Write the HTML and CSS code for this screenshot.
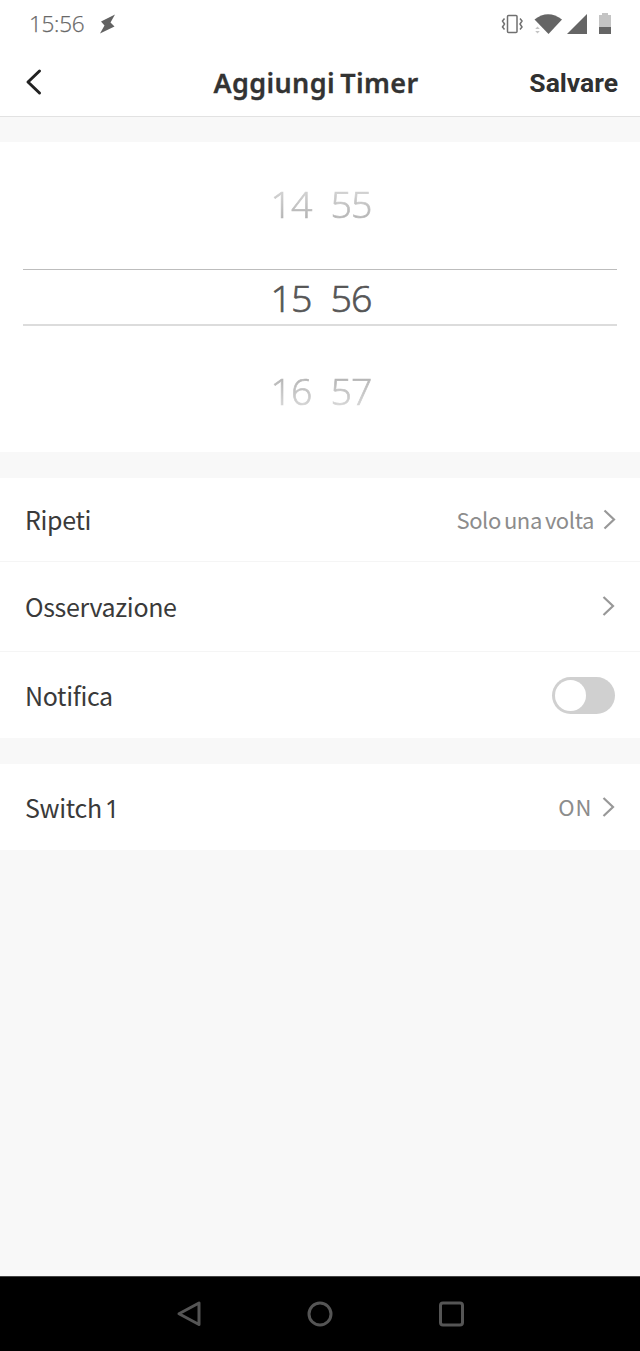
FILE: index.html
```html
<!DOCTYPE html>
<html lang="it">
<head>
<meta charset="utf-8">
<title>Aggiungi Timer</title>
<link rel="stylesheet" href="styles.css">
</head>
<body>
<div class="screen">
  <div class="status">
    <span class="clock">15:56</span>
    <svg class="bolt" width="18" height="22" viewBox="0 0 18 22"><path d="M16 1.500 2 8.500 5.500 12.500 1 20.500 15.500 13.500 11.500 9.500Z" fill="#626262"/></svg>
    <svg class="signals" width="114" height="26" viewBox="500 11 114 26">
      <rect x="507.500" y="15.500" width="9.500" height="17" rx="1" fill="none" stroke="#707070" stroke-width="1.500"/>
      <path d="M504.500 18.500l-2 2.500 2 3-2 3 2 2.500M520 18.500l2 2.500-2 3 2 3-2 2.500" fill="none" stroke="#707070" stroke-width="1.500"/>
      <path d="M534.500 19.500Q548 8.800 562 19.500L548.500 34Z" fill="#656565"/>
      <path d="M535.200 29l2.300-2.500 2.300 2.500zM535.200 31l2.300 2.500 2.300-2.500z" fill="#c4c4c4"/>
      <path d="M587 14v20h-20z" fill="#656565"/>
      <path d="M602 13h6v2h3v12.500h-12V15h3z" fill="#c4c4c4"/>
      <path d="M599 27h12v7h-12z" fill="#656565"/>
    </svg>
  </div>
  <header class="header">
    <svg class="back" width="18" height="28" viewBox="0 0 18 28"><path d="M15.500 3 4 14l11.500 11" fill="none" stroke="#222" stroke-width="3" stroke-linecap="round" stroke-linejoin="round"/></svg>
    <h1 class="title">Aggiungi Timer</h1>
    <span class="save">Salvare</span>
  </header>
  <section class="picker">
    <div class="time previous"><span>14</span><span>55</span></div>
    <div class="time current"><span>15</span><span>56</span></div>
    <div class="time next"><span>16</span><span>57</span></div>
  </section>
  <section class="group">
    <div class="row repeat"><span class="label">Ripeti</span><span class="value">Solo una volta</span><svg class="chevron" width="14" height="22" viewBox="0 0 14 22"><path d="M2.500 1.500l9.500 9-9.500 9" fill="none" stroke="#989898" stroke-width="2.200"/></svg></div>
    <div class="row note"><span class="label">Osservazione</span><svg class="chevron" width="14" height="22" viewBox="0 0 14 22"><path d="M1.500 1l9.500 9-9.500 9" fill="none" stroke="#989898" stroke-width="2.200"/></svg></div>
    <div class="row notify"><span class="label">Notifica</span><span class="toggle"></span></div>
  </section>
  <section class="group">
    <div class="row switch"><span class="label">Switch <span class="digit">1</span></span><span class="value on">ON</span><svg class="chevron" width="14" height="22" viewBox="0 0 14 22"><path d="M1.500 2l9.500 9-9.500 9" fill="none" stroke="#989898" stroke-width="2.200"/></svg></div>
  </section>
  <nav class="nav">
    <svg width="28" height="28" viewBox="0 0 28 28"><path d="M24 3v21.500L4 13.800z"/></svg>
    <svg width="28" height="28" viewBox="0 0 28 28"><circle cx="13" cy="14" r="11"/></svg>
    <svg width="28" height="28" viewBox="0 0 28 28"><rect x="2.500" y="3" width="22" height="22" rx="2.500"/></svg>
  </nav>
</div>
</body>
</html>
```
FILE: styles.css
```css
* { box-sizing: border-box; }
body { margin: 0; background: #f8f8f8; font-family: "Noto Sans CJK SC", "Noto Sans", sans-serif; }
.screen { width: 640px; height: 1351px; display: flex; flex-direction: column; background: #f8f8f8; }
svg { display: block; flex: none; }
.status { height: 48px; padding: 0 26px 0 29px; display: flex; align-items: center; background: #fff; }
.clock { font: 300 22.500px/48px "Open Sans", sans-serif; letter-spacing: -0.300px; color: #686868; width: 70px; -webkit-text-stroke: 0.250px #686868; }
.signals { margin-left: auto; }
.header { height: 69px; padding: 0 22px 0 24px; display: grid; grid-template-columns: 115px 1fr 125px; align-items: center; background: #fff; border-bottom: 1px solid #e2e2e2; }
.title { margin: 0; text-align: center; font: 600 27px/40px "Noto Sans", sans-serif; letter-spacing: 0.350px; word-spacing: -2px; color: #333; white-space: nowrap; -webkit-text-stroke: 0.300px #333; transform: translateY(1px); }
.save { text-align: right; font: 700 26.500px/40px Roboto, sans-serif; color: #303030; transform: translateY(0.500px); }
.picker { height: 310px; margin-top: 25px; padding: 34px 23px 0; background: #fff; font: 300 37.500px/56px "Open Sans", sans-serif; letter-spacing: -0.900px; }
.time { display: flex; justify-content: center; gap: 19px; height: 56px; padding-left: 2px; }
.previous, .next { color: transparent; background-clip: text; -webkit-background-clip: text; -webkit-text-stroke: 0.700px transparent; }
.previous { background-image: linear-gradient(#ddd 10%, #aaa 90%); }
.current { height: 57px; margin: 37px 0; border-top: 1px solid #bdbdbd; border-bottom: 2px solid #dcdcdc; color: #555; -webkit-text-stroke: 0.700px #555; }
.next { background-image: linear-gradient(#aaa 10%, #ddd 90%); }
.group { margin-top: 26px; background: #fff; }
.row { display: flex; align-items: center; padding: 0 24px 0 25px; }
.label { margin-right: auto; font-size: 25px; line-height: 40px; letter-spacing: -0.350px; color: #3a3a3a; transform: translateY(-1px); }
.value { font-size: 22px; line-height: 40px; letter-spacing: -0.400px; word-spacing: -1.500px; color: #8c8c8c; margin-right: 8px; transform: translateY(-1px); }
.on { margin-right: 10px; letter-spacing: 0.700px; }
.digit { font-family: "Noto Sans", sans-serif; margin-left: -2px; }
.repeat { height: 84px; border-bottom: 1px solid #f5f5f5; }
.note { height: 90px; border-bottom: 1px solid #f5f5f5; }
.notify { height: 86px; padding-right: 25px; }
.notify .label { transform: none; }
.switch { height: 86px; }
.switch .label { transform: none; }
.toggle { width: 63px; height: 37px; padding: 3px; border-radius: 19px; background: #d0d0d0; }
.toggle::before { content: ""; display: block; width: 31px; height: 31px; border-radius: 50%; background: #fff; }
.nav { margin-top: auto; height: 75px; padding: 0 174px 0 175px; display: flex; justify-content: space-between; align-items: center; background: #000; border-top: 1px solid #444; }
.nav path, .nav circle, .nav rect { fill: none; stroke: #555; stroke-width: 3; stroke-linejoin: round; }
```
